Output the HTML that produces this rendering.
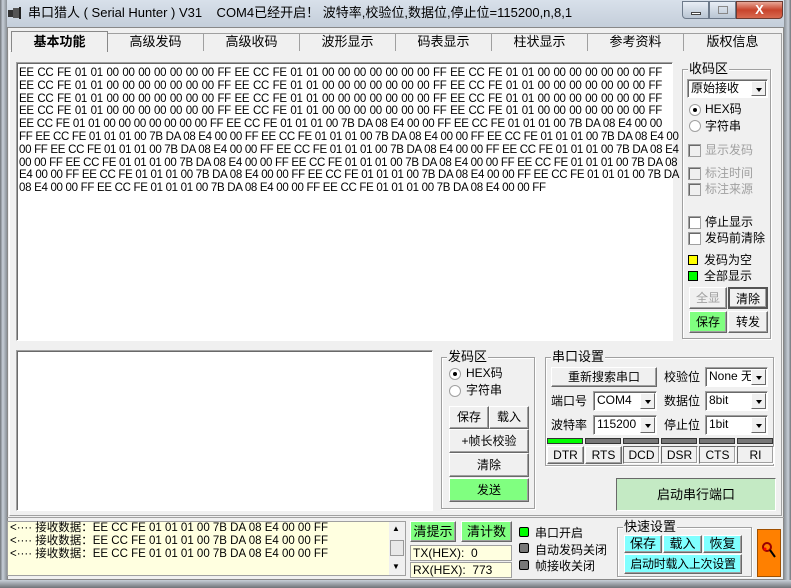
<!DOCTYPE html>
<html><head><meta charset="utf-8"><style>
*{margin:0;padding:0;box-sizing:border-box}
body{width:791px;height:588px;overflow:hidden;background:#f0f0f0;font-family:"Liberation Sans","Noto Sans CJK SC",sans-serif;font-size:12px;color:#000;position:relative}
.a{position:absolute}
.t{position:absolute;white-space:nowrap;line-height:14px}
.btn{position:absolute;border:1px solid;border-color:#fff #696969 #696969 #fff;box-shadow:inset -1px -1px 0 #a0a0a0;background:#f0f0f0;text-align:center;font-size:12px;white-space:nowrap}
.sunk{position:absolute;border:1px solid;border-color:#a0a0a0 #fff #fff #a0a0a0;box-shadow:inset 1px 1px 0 #696969;background:#fff}
.grp{position:absolute;border:1px solid #a0a0a0;box-shadow:1px 1px 0 #fff, inset 1px 1px 0 #fff}
.grp span{position:absolute;top:-9px;left:5px;background:#f0f0f0;padding:0 1px;font-size:13px;line-height:16px}
.sel{position:absolute;background:#fff;border:1px solid;border-color:#a0a0a0 #fff #fff #a0a0a0;box-shadow:inset 1px 1px 0 #696969;font-size:12px;padding-left:3px;line-height:16px}
.sel i{position:absolute;right:1px;top:1px;bottom:1px;width:15px;background:#f0f0f0;border:1px solid;border-color:#fff #696969 #696969 #fff}
.sel i:after{content:"";position:absolute;left:4px;top:6px;border:3px solid transparent;border-top:4px solid #000}
.rad{position:absolute;width:12px;height:12px;border-radius:50%;background:#fff;border:1px solid #a0a0a0}
.rad.on:after{content:"";position:absolute;left:3px;top:3px;width:4px;height:4px;border-radius:50%;background:#000}
.chk{position:absolute;width:13px;height:13px;background:#fff;border:1px solid #a0a0a0;box-shadow:inset 1px 1px 0 #696969}
.chk.g{background:#f0f0f0}
.led{position:absolute;width:10px;height:10px;border:1px solid #000}
.hex{position:absolute;left:19px;top:67px;width:643px;font-family:"Liberation Sans Narrow","Liberation Sans",sans-serif;font-size:11.5px;line-height:12.8px;letter-spacing:-0.3px}
.hex div{white-space:nowrap;text-align:justify;text-align-last:justify;height:12.8px}
.hex div.l{text-align-last:left}
.tab{position:absolute;top:33px;height:18px;border:1px solid #a0a0a0;border-bottom:none;background:#f0f0f0;text-align:center;font-size:13px;line-height:16px}
</style></head><body>
<div class="a" style="left:0;top:0;width:791px;height:27px;background:linear-gradient(#d8e0ea,#c4ceda)"></div>
<div class="a" style="left:0;top:0;width:7px;height:588px;background:linear-gradient(90deg,#6f7378,#c7cfd8 40%,#8a9096)"></div>
<div class="a" style="right:0;top:0;width:7px;height:588px;background:linear-gradient(90deg,#8a9096,#c7cfd8 60%,#6f7378)"></div>
<div class="a" style="left:0;bottom:0;width:791px;height:8px;background:linear-gradient(#c7cfd8,#6f7378)"></div>
<div class="a" style="left:7px;top:27px;width:777px;height:553px;background:#f0f0f0;border:1px solid #888"></div>
<div class="t" style="left:6px;top:6px;width:14px;height:14px"><svg width="16" height="14"><rect x="2" y="4" width="5" height="7" fill="#333"/><rect x="7" y="2" width="6" height="10" fill="#555"/><rect x="13" y="1" width="2" height="12" fill="#222"/></svg></div>
<div class="t" style="left:28px;top:6px;font-size:13px;color:#000">串口猎人 ( Serial Hunter ) V31 &nbsp;&nbsp;&nbsp;COM4已经开启！ 波特率,校验位,数据位,停止位=115200,n,8,1</div>
<div class="a" style="left:682px;top:1px;width:27px;height:18px;border:1px solid #6d7a8a;border-radius:0 0 0 4px;background:linear-gradient(#e8eef5,#b9c5d3)"><div class="a" style="left:8px;top:10px;width:10px;height:3px;background:#fff;border:1px solid #444"></div></div>
<div class="a" style="left:709px;top:1px;width:27px;height:18px;border:1px solid #6d7a8a;background:linear-gradient(#e8eef5,#b9c5d3)"><div class="a" style="left:8px;top:4px;width:10px;height:8px;border:1px solid #888"></div></div>
<div class="a" style="left:736px;top:1px;width:47px;height:18px;border:1px solid #6d3a30;border-radius:0 0 4px 0;background:linear-gradient(#e8a898,#c8442c 50%,#d86a50);color:#fff;font-weight:bold;text-align:center;font-size:13px;line-height:16px">X</div>
<div class="a" style="left:9px;top:50px;width:773px;height:466px;border:1px solid;border-color:#fff #a0a0a0 #a0a0a0 #fff"></div>
<div class="tab" style="left:11px;top:31px;height:21px;width:97px;font-weight:bold;line-height:20px;border-color:#888;background:#f0f0f0;z-index:2">基本功能</div>
<div class="tab" style="left:107px;width:97px">高级发码</div>
<div class="tab" style="left:203px;width:97px">高级收码</div>
<div class="tab" style="left:299px;width:97px">波形显示</div>
<div class="tab" style="left:395px;width:97px">码表显示</div>
<div class="tab" style="left:491px;width:97px">柱状显示</div>
<div class="tab" style="left:587px;width:97px">参考资料</div>
<div class="tab" style="left:683px;width:99px">版权信息</div>
<div class="sunk" style="left:16px;top:62px;width:657px;height:279px"></div>
<div class="hex">
<div>EE CC FE 01 01 00 00 00 00 00 00 00 FF EE CC FE 01 01 00 00 00 00 00 00 00 FF EE CC FE 01 01 00 00 00 00 00 00 00 FF</div>
<div>EE CC FE 01 01 00 00 00 00 00 00 00 FF EE CC FE 01 01 00 00 00 00 00 00 00 FF EE CC FE 01 01 00 00 00 00 00 00 00 FF</div>
<div>EE CC FE 01 01 00 00 00 00 00 00 00 FF EE CC FE 01 01 00 00 00 00 00 00 00 FF EE CC FE 01 01 00 00 00 00 00 00 00 FF</div>
<div>EE CC FE 01 01 00 00 00 00 00 00 00 FF EE CC FE 01 01 00 00 00 00 00 00 00 FF EE CC FE 01 01 00 00 00 00 00 00 00 FF</div>
<div>EE CC FE 01 01 00 00 00 00 00 00 00 FF EE CC FE 01 01 01 00 7B DA 08 E4 00 00 FF EE CC FE 01 01 01 00 7B DA 08 E4 00 00</div>
<div>FF EE CC FE 01 01 01 00 7B DA 08 E4 00 00 FF EE CC FE 01 01 01 00 7B DA 08 E4 00 00 FF EE CC FE 01 01 01 00 7B DA 08 E4 00</div>
<div>00 FF EE CC FE 01 01 01 00 7B DA 08 E4 00 00 FF EE CC FE 01 01 01 00 7B DA 08 E4 00 00 FF EE CC FE 01 01 01 00 7B DA 08 E4</div>
<div>00 00 FF EE CC FE 01 01 01 00 7B DA 08 E4 00 00 FF EE CC FE 01 01 01 00 7B DA 08 E4 00 00 FF EE CC FE 01 01 01 00 7B DA 08</div>
<div>E4 00 00 FF EE CC FE 01 01 01 00 7B DA 08 E4 00 00 FF EE CC FE 01 01 01 00 7B DA 08 E4 00 00 FF EE CC FE 01 01 01 00 7B DA</div>
<div class="l">08 E4 00 00 FF EE CC FE 01 01 01 00 7B DA 08 E4 00 00 FF EE CC FE 01 01 01 00 7B DA 08 E4 00 00 FF</div>
</div>
<div class="grp" style="left:682px;top:69px;width:89px;height:270px"><span>收码区</span></div>
<div class="sel" style="left:687px;top:79px;width:81px;height:19px">原始接收<i></i></div>
<div class="rad on" style="left:689px;top:104px"></div><div class="t" style="left:705px;top:102px">HEX码</div>
<div class="rad" style="left:689px;top:120px"></div><div class="t" style="left:705px;top:119px">字符串</div>
<div class="chk g" style="left:688px;top:144px"></div><div class="t" style="left:705px;top:143px;color:#a0a0a0">显示发码</div>
<div class="chk g" style="left:688px;top:167px"></div><div class="t" style="left:705px;top:166px;color:#a0a0a0">标注时间</div>
<div class="chk g" style="left:688px;top:183px"></div><div class="t" style="left:705px;top:182px;color:#a0a0a0">标注来源</div>
<div class="chk" style="left:688px;top:216px"></div><div class="t" style="left:705px;top:215px">停止显示</div>
<div class="chk" style="left:688px;top:232px"></div><div class="t" style="left:705px;top:231px">发码前清除</div>
<div class="led" style="left:688px;top:255px;background:#ff0"></div><div class="t" style="left:704px;top:253px">发码为空</div>
<div class="led" style="left:688px;top:271px;background:#0f0"></div><div class="t" style="left:704px;top:269px">全部显示</div>
<div class="btn" style="left:689px;top:287px;width:38px;height:22px;line-height:20px;color:#a0a0a0">全显</div>
<div class="btn" style="left:728px;top:287px;width:40px;height:22px;line-height:20px;border:2px solid #555">清除</div>
<div class="btn" style="left:689px;top:311px;width:38px;height:22px;line-height:20px;background:#80ff80">保存</div>
<div class="btn" style="left:728px;top:311px;width:40px;height:22px;line-height:20px">转发</div>
<div class="sunk" style="left:16px;top:350px;width:417px;height:161px"></div>
<div class="grp" style="left:441px;top:357px;width:94px;height:152px"><span>发码区</span></div>
<div class="rad on" style="left:449px;top:368px"></div><div class="t" style="left:466px;top:366px">HEX码</div>
<div class="rad" style="left:449px;top:385px"></div><div class="t" style="left:466px;top:383px">字符串</div>
<div class="btn" style="left:449px;top:406px;width:40px;height:23px;line-height:21px">保存</div>
<div class="btn" style="left:489px;top:406px;width:40px;height:23px;line-height:21px">载入</div>
<div class="btn" style="left:449px;top:429px;width:80px;height:24px;line-height:22px">+帧长校验</div>
<div class="btn" style="left:449px;top:453px;width:80px;height:24px;line-height:22px">清除</div>
<div class="btn" style="left:449px;top:478px;width:80px;height:24px;line-height:22px;background:#80ff80">发送</div>
<div class="grp" style="left:545px;top:357px;width:229px;height:109px"><span>串口设置</span></div>
<div class="btn" style="left:551px;top:367px;width:106px;height:20px;line-height:18px">重新搜索串口</div>
<div class="t" style="left:664px;top:370px">校验位</div>
<div class="sel" style="left:705px;top:367px;width:63px;height:20px">None 无<i></i></div>
<div class="t" style="left:551px;top:394px">端口号</div>
<div class="sel" style="left:593px;top:391px;width:64px;height:20px">COM4<i></i></div>
<div class="t" style="left:664px;top:394px">数据位</div>
<div class="sel" style="left:705px;top:391px;width:63px;height:20px">8bit<i></i></div>
<div class="t" style="left:551px;top:418px">波特率</div>
<div class="sel" style="left:593px;top:415px;width:64px;height:20px">115200<i></i></div>
<div class="t" style="left:664px;top:418px">停止位</div>
<div class="sel" style="left:705px;top:415px;width:63px;height:20px">1bit<i></i></div>
<div class="a" style="left:547px;top:438px;width:36px;height:6px;background:#0f0;border:1px solid #333"></div>
<div class="a" style="left:585px;top:438px;width:36px;height:6px;background:#777;border:1px solid #333"></div>
<div class="a" style="left:623px;top:438px;width:36px;height:6px;background:#777;border:1px solid #333"></div>
<div class="a" style="left:661px;top:438px;width:36px;height:6px;background:#777;border:1px solid #333"></div>
<div class="a" style="left:699px;top:438px;width:36px;height:6px;background:#777;border:1px solid #333"></div>
<div class="a" style="left:737px;top:438px;width:36px;height:6px;background:#777;border:1px solid #333"></div>
<div class="btn" style="left:547px;top:446px;width:37px;height:18px;line-height:16px">DTR</div>
<div class="btn" style="left:585px;top:446px;width:37px;height:18px;line-height:16px">RTS</div>
<div class="btn" style="left:623px;top:446px;width:37px;height:18px;line-height:16px;border-color:#696969 #fff #fff #696969">DCD</div>
<div class="btn" style="left:661px;top:446px;width:37px;height:18px;line-height:16px;border-color:#696969 #fff #fff #696969">DSR</div>
<div class="btn" style="left:699px;top:446px;width:37px;height:18px;line-height:16px;border-color:#696969 #fff #fff #696969">CTS</div>
<div class="btn" style="left:737px;top:446px;width:37px;height:18px;line-height:16px;border-color:#696969 #fff #fff #696969">RI</div>
<div class="a" style="left:616px;top:478px;width:160px;height:33px;border:1px solid;border-color:#696969 #fff #fff #696969;background:#c4eac4;text-align:center;line-height:31px;font-size:13px">启动串行端口</div>
<div class="a" style="left:7px;top:517px;width:777px;height:1px;background:#a0a0a0"></div>
<div class="a" style="left:7px;top:521px;width:399px;height:55px;background:#ffffe0;border:1px solid #a0a0a0"></div>
<div class="t" style="left:10px;top:522px;font-size:11.5px;line-height:13px">&lt;···· 接收数据：EE CC FE 01 01 01 00 7B DA 08 E4 00 00 FF<br>&lt;···· 接收数据：EE CC FE 01 01 01 00 7B DA 08 E4 00 00 FF<br>&lt;···· 接收数据：EE CC FE 01 01 01 00 7B DA 08 E4 00 00 FF</div>
<div class="a" style="left:389px;top:522px;width:16px;height:53px;background:#f0f0f0"></div>
<div class="a" style="left:390px;top:540px;width:14px;height:16px;border:1px solid #999;background:#e8e8e8"></div>
<div class="t" style="left:392px;top:522px;font-size:8px">▲</div><div class="t" style="left:392px;top:560px;font-size:8px">▼</div>
<div class="btn" style="left:410px;top:521px;width:46px;height:21px;line-height:19px;background:#80ff80;font-size:13px">清提示</div>
<div class="btn" style="left:461px;top:521px;width:51px;height:21px;line-height:19px;background:#80ff80;font-size:13px">清计数</div>
<div class="a" style="left:410px;top:545px;width:102px;height:16px;background:#ffffe0;border:1px solid #a0a0a0;font-size:12px;line-height:14px;padding-left:2px">TX(HEX): &nbsp;0</div>
<div class="a" style="left:410px;top:562px;width:102px;height:16px;background:#ffffe0;border:1px solid #a0a0a0;font-size:12px;line-height:14px;padding-left:2px">RX(HEX): &nbsp;773</div>
<div class="led" style="left:519px;top:527px;background:#0f0;border-radius:2px"></div><div class="t" style="left:535px;top:526px">串口开启</div>
<div class="led" style="left:519px;top:543px;background:#777;border-radius:2px"></div><div class="t" style="left:535px;top:543px">自动发码关闭</div>
<div class="led" style="left:519px;top:560px;background:#777;border-radius:2px"></div><div class="t" style="left:535px;top:559px">帧接收关闭</div>
<div class="grp" style="left:617px;top:527px;width:135px;height:50px"><span>快速设置</span></div>
<div class="btn" style="left:624px;top:535px;width:38px;height:18px;line-height:16px;background:#80ffff;font-size:13px">保存</div>
<div class="btn" style="left:663px;top:535px;width:39px;height:18px;line-height:16px;background:#80ffff;font-size:13px">载入</div>
<div class="btn" style="left:703px;top:535px;width:39px;height:18px;line-height:16px;background:#80ffff;font-size:13px">恢复</div>
<div class="btn" style="left:624px;top:554px;width:118px;height:20px;line-height:18px;background:#80ffff;font-size:12px;letter-spacing:-0.3px">启动时载入上次设置</div>
<div class="a" style="left:757px;top:529px;width:24px;height:48px;background:#ff8000;border:1px solid #a05000"><svg width="22" height="46"><circle cx="9" cy="17" r="4" fill="none" stroke="#900" stroke-width="2"/><line x1="12" y1="20" x2="17" y2="27" stroke="#000" stroke-width="2"/><circle cx="7" cy="19" r="1.5" fill="#f00"/></svg></div>
</body></html>
